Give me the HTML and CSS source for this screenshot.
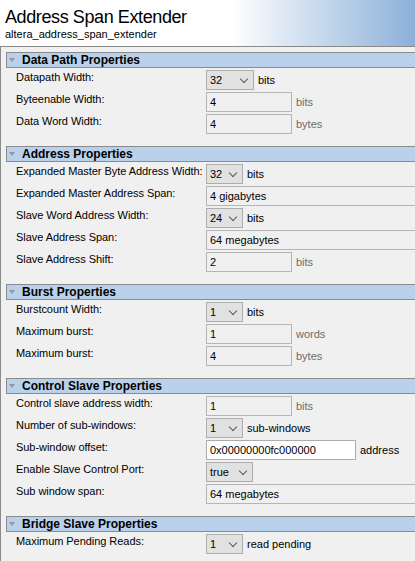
FILE: index.html
```html
<!DOCTYPE html>
<html>
<head>
<meta charset="utf-8">
<link rel="stylesheet" href="styles.css">
</head>
<body>
<div class="page">
  <header class="hdr">
    <div class="title">Address Span Extender</div>
    <div class="sub">altera_address_span_extender</div>
  </header>
  <main class="panel">
    <section class="group">
      <div class="ghead"><span class="tri"></span>Data Path Properties</div>
      <div class="gbody">
        <div class="row"><span class="lbl">Datapath Width:</span><div class="ctl"><span class="sel w48">32<span class="chev"></span></span><span class="unit">bits</span></div></div>
        <div class="row"><span class="lbl">Byteenable Width:</span><div class="ctl"><span class="fld">4</span><span class="unit dim">bits</span></div></div>
        <div class="row"><span class="lbl">Data Word Width:</span><div class="ctl"><span class="fld">4</span><span class="unit dim">bytes</span></div></div>
      </div>
    </section>
    <section class="group">
      <div class="ghead"><span class="tri"></span>Address Properties</div>
      <div class="gbody">
        <div class="row"><span class="lbl">Expanded Master Byte Address Width:</span><div class="ctl"><span class="sel">32<span class="chev"></span></span><span class="unit">bits</span></div></div>
        <div class="row"><span class="lbl">Expanded Master Address Span:</span><div class="ctl"><span class="fld long">4 gigabytes</span></div></div>
        <div class="row"><span class="lbl">Slave Word Address Width:</span><div class="ctl"><span class="sel">24<span class="chev"></span></span><span class="unit">bits</span></div></div>
        <div class="row"><span class="lbl">Slave Address Span:</span><div class="ctl"><span class="fld long">64 megabytes</span></div></div>
        <div class="row"><span class="lbl">Slave Address Shift:</span><div class="ctl"><span class="fld">2</span><span class="unit dim">bits</span></div></div>
      </div>
    </section>
    <section class="group">
      <div class="ghead"><span class="tri"></span>Burst Properties</div>
      <div class="gbody">
        <div class="row"><span class="lbl">Burstcount Width:</span><div class="ctl"><span class="sel">1<span class="chev"></span></span><span class="unit">bits</span></div></div>
        <div class="row"><span class="lbl">Maximum burst:</span><div class="ctl"><span class="fld">1</span><span class="unit dim">words</span></div></div>
        <div class="row"><span class="lbl">Maximum burst:</span><div class="ctl"><span class="fld">4</span><span class="unit dim">bytes</span></div></div>
      </div>
    </section>
    <section class="group">
      <div class="ghead"><span class="tri"></span>Control Slave Properties</div>
      <div class="gbody">
        <div class="row"><span class="lbl">Control slave address width:</span><div class="ctl"><span class="fld">1</span><span class="unit dim">bits</span></div></div>
        <div class="row"><span class="lbl">Number of sub-windows:</span><div class="ctl"><span class="sel">1<span class="chev"></span></span><span class="unit">sub-windows</span></div></div>
        <div class="row"><span class="lbl">Sub-window offset:</span><div class="ctl"><span class="fld edit">0x00000000fc000000</span><span class="unit">address</span></div></div>
        <div class="row"><span class="lbl">Enable Slave Control Port:</span><div class="ctl"><span class="sel w47">true<span class="chev"></span></span></div></div>
        <div class="row"><span class="lbl">Sub window span:</span><div class="ctl"><span class="fld long">64 megabytes</span></div></div>
      </div>
    </section>
    <section class="group">
      <div class="ghead"><span class="tri"></span>Bridge Slave Properties</div>
      <div class="gbody">
        <div class="row"><span class="lbl">Maximum Pending Reads:</span><div class="ctl"><span class="sel">1<span class="chev"></span></span><span class="unit">read pending</span></div></div>
      </div>
    </section>
  </main>
</div>
</body>
</html>
```
FILE: styles.css
```css
html, body {
  margin: 0;
  padding: 0;
  overflow: hidden;
  background: #f0f0f0;
}
body {
  font-family: "Liberation Sans", Arial, sans-serif;
  font-size: 11px;
  color: #000;
}
.page {
  width: 415px;
  height: 561px;
  overflow: hidden;
  display: flex;
  flex-direction: column;
}
.hdr {
  flex: none;
  box-sizing: border-box;
  height: 47px;
  padding: 7px 0 0 5px;
  border-bottom: 1px solid #8a8a8a;
  background: linear-gradient(to right, #ffffff 0, #ffffff 230px, #8cb0d9 415px);
}
.title {
  font-size: 18px;
  line-height: 20px;
  letter-spacing: -0.4px;
}
.sub {
  font-size: 11px;
  line-height: 14px;
}
.panel {
  flex: 1;
  min-width: 0;
  border-left: 1px solid #8a8a8a;
  padding: 5px 0 0 5px;
  overflow: hidden;
}
.ghead {
  height: 14px;
  line-height: 14px;
  border: 1px solid #8a8a8a;
  border-right: none;
  background: #b9d1ea;
  font-weight: bold;
  font-size: 12px;
  display: flex;
  align-items: center;
  white-space: nowrap;
}
.tri {
  width: 0;
  height: 0;
  border-left: 3.5px solid transparent;
  border-right: 3.5px solid transparent;
  border-top: 4px solid #8d99a6;
  margin: 0 7px 0 2px;
}
.gbody {
  padding: 2px 0 10px 10px;
}
.row {
  display: flex;
  height: 20px;
  margin-bottom: 2px;
}
.lbl {
  width: 190px;
  flex: none;
  line-height: 14px;
  letter-spacing: -0.05px;
  white-space: nowrap;
}
.ctl {
  display: flex;
  align-items: center;
  gap: 4px;
  flex: none;
}
.sel, .fld {
  box-sizing: border-box;
  height: 20px;
  line-height: 18px;
  border: 1px solid #adadad;
  padding-left: 3px;
  white-space: nowrap;
  flex: none;
}
.sel {
  width: 37px;
  background: #e1e1e1;
  display: flex;
  align-items: center;
  justify-content: space-between;
  padding-right: 5px;
}
.sel.w48 { width: 48px; }
.sel.w47 { width: 47px; }
.chev {
  width: 5px;
  height: 5px;
  border-right: 1px solid #5a5a5a;
  border-bottom: 1px solid #5a5a5a;
  transform: translateY(-1px) rotate(45deg);
  margin-right: 1px;
}
.fld {
  width: 86px;
  background: #f0f0f0;
  border-color: #b5b5b5;
}
.fld.long { width: 260px; }
.fld.edit {
  width: 150px;
  background: #ffffff;
  border-color: #acacac;
}
.unit { white-space: nowrap; }
.unit.dim { color: #6d6d6d; }
```
